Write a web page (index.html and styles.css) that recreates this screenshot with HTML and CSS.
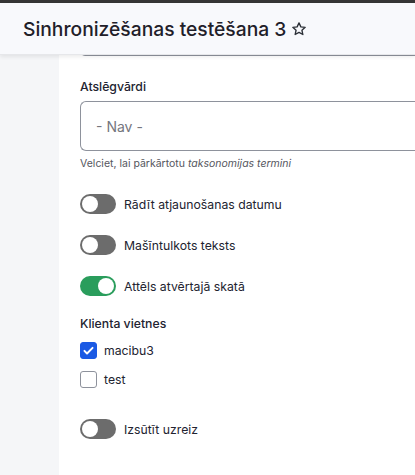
FILE: index.html
```html
<!DOCTYPE html>
<html lang="lv">
<head>
<meta charset="utf-8">
<link rel="stylesheet" href="styles.css">
</head>
<body>
<div class="topbar"></div>
<header class="header">
  <h1 class="title">Sinhronizēšanas testēšana 3</h1>
  <svg class="star" width="16" height="16" viewBox="0 0 24 24" fill="none" stroke="#2b2f36" stroke-width="2" stroke-linejoin="round"><path d="M12 2.8l2.8 6 6.5.7-4.9 4.4 1.4 6.4L12 17l-5.8 3.3 1.4-6.4-4.9-4.4 6.5-.7z"/></svg>
</header>
<div class="main">
  <div class="sidebar"></div>
  <div class="card">
    <div class="prev-input"></div>
    <div class="field">
      <div class="label">Atslēgvārdi</div>
      <div class="input">- Nav -</div>
      <div class="help">Velciet, lai pārkārtotu <em>taksonomijas termini</em></div>
    </div>
    <div class="toggle-row first"><span class="toggle"></span><span class="tlabel">Rādīt atjaunošanas datumu</span></div>
    <div class="toggle-row"><span class="toggle"></span><span class="tlabel">Mašīntulkots teksts</span></div>
    <div class="toggle-row"><span class="toggle on"></span><span class="tlabel">Attēls atvērtajā skatā</span></div>
    <div class="group">
      <div class="label">Klienta vietnes</div>
      <div class="check-row"><span class="checkbox checked"><svg width="13" height="13" viewBox="0 0 16 16" fill="none" stroke="#fff" stroke-width="2.4" stroke-linecap="round" stroke-linejoin="round"><path d="M3 8.5l3.2 3.2L13 4.8"/></svg></span><span class="clabel">macibu3</span></div>
      <div class="check-row"><span class="checkbox"></span><span class="clabel">test</span></div>
    </div>
    <div class="toggle-row last"><span class="toggle"></span><span class="tlabel">Izsūtīt uzreiz</span></div>
  </div>
</div>
</body>
</html>
```
FILE: styles.css
```css
html, body {
  margin: 0;
  padding: 0;
}
body {
  width: 415px;
  height: 475px;
  overflow: hidden;
  background: #f5f6f8;
  font-family: Inter, "Noto Sans", sans-serif;
  color: #222330;
}
.topbar {
  height: 3px;
  background: #353535;
}
.header {
  position: relative;
  z-index: 2;
  height: 52px;
  display: flex;
  align-items: center;
  padding-left: 23px;
  background: #f8f9fc;
  box-shadow: 0 2px 4px rgba(0, 0, 0, 0.08);
  border-bottom: 1px solid #e6e7ea;
  box-sizing: border-box;
}
.title {
  margin: 0;
  font-size: 19.25px;
  font-weight: 500;
  color: #1f2029;
}
.star {
  margin-left: 5px;
  margin-top: 1px;
}
.main {
  display: flex;
  margin-top: -4px;
  height: 430px;
}
.sidebar {
  width: 59px;
  flex: none;
}
.card {
  flex: 1;
  background: #fff;
  padding-left: 21px;
}
.prev-input {
  height: 4px;
  border: 1px solid #8e929c;
  border-top: none;
  border-right: none;
  border-radius: 0 0 0 7px;
}
.field {
  margin-top: 21px;
}
.label {
  font-size: 12.25px;
  line-height: 20px;
  font-weight: 500;
  color: #222330;
}
.input {
  margin-top: 4px;
  height: 50px;
  box-sizing: border-box;
  border: 1px solid #8e929c;
  border-right: none;
  border-radius: 6px 0 0 6px;
  padding-left: 15px;
  display: flex;
  align-items: center;
  font-size: 14px;
  color: #75767d;
}
.help {
  margin-top: 5px;
  font-size: 10.5px;
  line-height: 16px;
  color: #55565e;
}
.toggle-row {
  display: flex;
  align-items: center;
  height: 20px;
  margin-top: 21px;
}
.toggle-row.first {
  margin-top: 22px;
}
.toggle-row.last {
  margin-top: 30px;
}
.toggle {
  width: 36px;
  height: 20px;
  border-radius: 10px;
  background: #6c6c6c;
  position: relative;
  flex: none;
}
.toggle::after {
  content: "";
  position: absolute;
  left: 2px;
  top: 2px;
  width: 16px;
  height: 16px;
  border-radius: 50%;
  background: #fff;
}
.toggle.on {
  background: #2a9d5c;
}
.toggle.on::after {
  left: 18px;
}
.tlabel {
  margin-left: 8px;
  font-size: 12.25px;
  color: #222330;
}
.group {
  margin-top: 18px;
}
.check-row {
  display: flex;
  align-items: center;
  height: 20px;
  margin-top: 6px;
}
.check-row + .check-row {
  margin-top: 9px;
}
.checkbox {
  width: 17px;
  height: 17px;
  box-sizing: border-box;
  border: 1px solid #8e929c;
  border-radius: 3px;
  display: flex;
  align-items: center;
  justify-content: center;
  flex: none;
}
.checkbox.checked {
  background: #1b5ae4;
  border-color: #1b5ae4;
}
.clabel {
  margin-left: 7px;
  font-size: 12.25px;
  color: #222330;
}
```
